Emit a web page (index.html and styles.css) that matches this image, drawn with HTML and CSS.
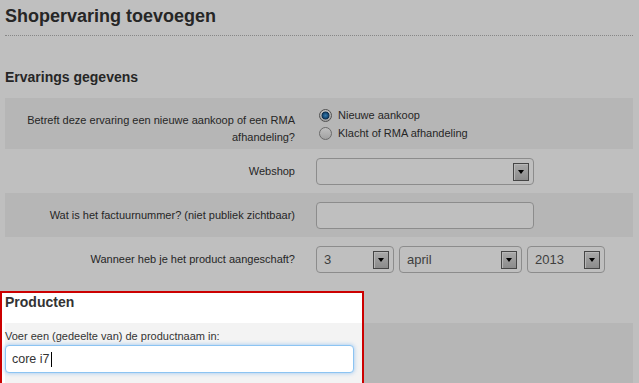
FILE: index.html
```html
<!DOCTYPE html>
<html lang="nl">
<head>
<meta charset="utf-8">
<title>Shopervaring toevoegen</title>
<link rel="stylesheet" href="styles.css">
</head>
<body>
<div class="page">
  <h1 class="title">Shopervaring toevoegen</h1>

  <section class="section">
    <h2 class="section-title">Ervarings gegevens</h2>

    <div class="form-row alt top">
      <div class="label label-multi">Betreft deze ervaring een nieuwe aankoop of een RMA afhandeling?</div>
      <div class="radios">
        <label class="radio-line"><input type="radio" name="type" class="radio" checked> Nieuwe aankoop</label>
        <label class="radio-line"><input type="radio" name="type" class="radio"> Klacht of RMA afhandeling</label>
      </div>
    </div>

    <div class="form-row">
      <div class="label">Webshop</div>
      <div class="control">
        <div class="select select-wide"><span class="select-value"></span><span class="select-btn"></span></div>
      </div>
    </div>

    <div class="form-row alt">
      <div class="label">Wat is het factuurnummer? (niet publiek zichtbaar)</div>
      <div class="control">
        <div class="text-field"></div>
      </div>
    </div>

    <div class="form-row">
      <div class="label">Wanneer heb je het product aangeschaft?</div>
      <div class="control date-group">
        <div class="select select-day"><span class="select-value">3</span><span class="select-btn"></span></div>
        <div class="select select-month"><span class="select-value">april</span><span class="select-btn"></span></div>
        <div class="select select-year"><span class="select-value">2013</span><span class="select-btn"></span></div>
      </div>
    </div>
  </section>

  <section class="section products">
    <h2 class="section-title products-title">Producten</h2>
    <div class="product-row">
      <div class="product-label">Voer een (gedeelte van) de productnaam in:</div>
      <div class="text-field focused"><span class="typed">core i7</span><span class="caret"></span></div>
    </div>
    <div class="highlight"></div>
  </section>
</div>
</body>
</html>
```

FILE: styles.css
```css
html, body {
  margin: 0;
  padding: 0;
  background: #ffffff;
  overflow: hidden;
}

body {
  font-family: "Liberation Sans", Arial, sans-serif;
  color: #333333;
  font-size: 11px;
}

.page {
  padding: 5px 6px 0 5px;
  position: relative;
}

.title {
  margin: 0;
  font-size: 18px;
  line-height: 22px;
  font-weight: bold;
  color: #333333;
  padding-bottom: 8px;
  border-bottom: 1px dotted #b4b4b4;
}

.section-title {
  margin: 33px 0 12px;
  font-size: 14px;
  line-height: 17px;
  font-weight: bold;
  color: #333333;
}

.form-row {
  display: grid;
  grid-template-columns: 290px 1fr;
  column-gap: 21px;
  align-items: center;
  padding: 9px 0 8px;
}

.form-row.alt {
  background: #f3f3f3;
}

.form-row.top {
  align-items: start;
  padding: 8px 0 3px;
}

.label {
  text-align: right;
  font-size: 11px;
  line-height: 17px;
  color: #333333;
}

.label-multi {
  padding-top: 6px;
}

.radios {
  display: flex;
  flex-direction: column;
}

.radio-line {
  display: flex;
  align-items: center;
  height: 18px;
  font-size: 11px;
  color: #333333;
}

.radio {
  -webkit-appearance: none;
  appearance: none;
  box-sizing: border-box;
  width: 13px;
  height: 13px;
  margin: 0 6px 0 3px;
  border: 1px solid #8e8e8e;
  border-radius: 50%;
  background: linear-gradient(#ffffff, #d8d8d8);
}

.radio:checked {
  border-color: #6e6e6e;
  background:
    radial-gradient(circle at 50% 50%, #4aa2e0 0, #2674b4 2px, #163f66 3.6px, rgba(0,0,0,0) 4.3px),
    linear-gradient(#ffffff, #d8d8d8);
}

.control {
  display: flex;
}

.date-group {
  gap: 5px;
}

.select {
  box-sizing: border-box;
  height: 27px;
  border: 1px solid #bbbbbb;
  border-radius: 4px;
  background: #ffffff;
  display: flex;
  align-items: center;
  justify-content: space-between;
  padding: 0 4px 0 7px;
  font-size: 13px;
  color: #555555;
}

.select-wide { width: 218px; }
.select-day { width: 78px; }
.select-month { width: 123px; }
.select-year { width: 78px; }

.select-btn {
  box-sizing: border-box;
  width: 16px;
  height: 18px;
  border: 1px solid #5c5c5c;
  background: linear-gradient(#e2e2e2, #bababa);
  box-shadow: inset 1px 1px 0 #f4f4f4;
  display: flex;
  align-items: center;
  justify-content: center;
}

.select-btn::after {
  content: "";
  width: 0;
  height: 0;
  border-left: 3.5px solid transparent;
  border-right: 3.5px solid transparent;
  border-top: 4px solid #000000;
  margin-top: 1px;
}

.text-field {
  box-sizing: border-box;
  width: 218px;
  height: 27px;
  border: 1px solid #bbbbbb;
  border-radius: 4px;
  background: #ffffff;
}

.products {
  position: relative;
}

.products-title {
  margin: 13px 0 12px;
}

.product-row {
  background: #f3f3f3;
  padding: 5px 0 12px;
}

.product-label {
  font-size: 11px;
  line-height: 17px;
  color: #333333;
}

.text-field.focused {
  width: 349px;
  height: 28px;
  border: 1px solid #8cc4f2;
  box-shadow: 0 0 4px rgba(90, 165, 240, 0.6);
  display: flex;
  align-items: center;
  padding: 0 6px;
  font-size: 12.5px;
  color: #333333;
}

.caret {
  display: inline-block;
  width: 1px;
  height: 15px;
  background: #000000;
  margin-left: 1px;
}

.highlight {
  position: absolute;
  left: -5px;
  top: -3px;
  width: 364px;
  height: 140px;
  box-sizing: border-box;
  border: 2px solid #cc0000;
  box-shadow: 0 0 0 2000px rgba(0, 0, 0, 0.25);
  pointer-events: none;
  z-index: 10;
}
```
